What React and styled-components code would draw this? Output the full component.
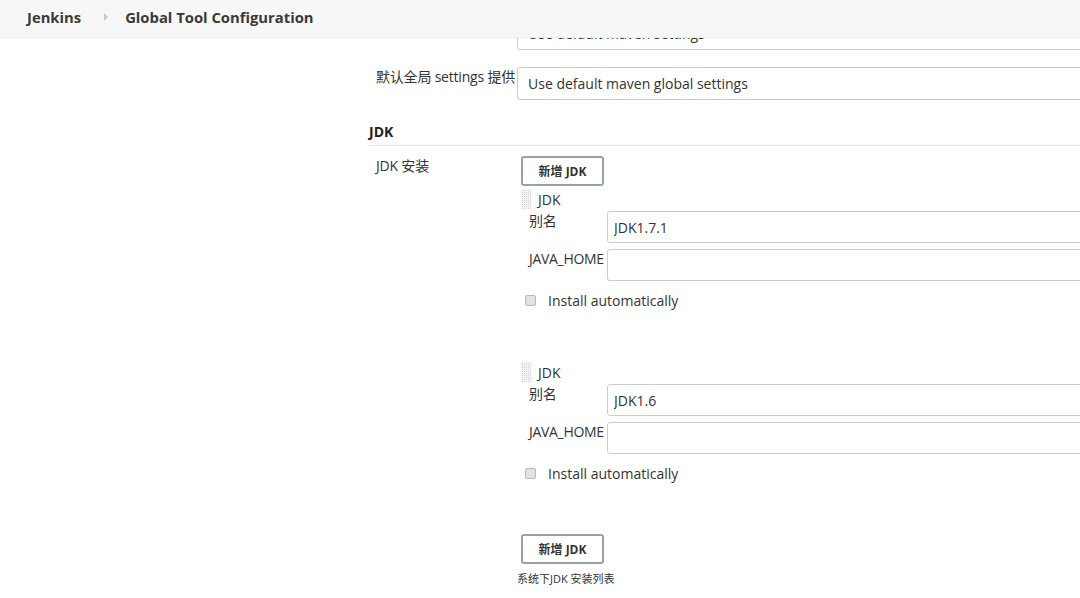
import React from "react"
import styled, { createGlobalStyle } from "styled-components"

const GlobalStyle = createGlobalStyle`
  html, body {
    margin: 0;
    padding: 0;
    overflow: hidden;
    background: #ffffff;
  }
  body {
    font-family: "Open Sans", "Noto Sans", "Noto Sans CJK SC", sans-serif;
    font-size: 14px;
    color: #333333;
  }
  * {
    box-sizing: border-box;
  }
`

const jdks = [
  { id: 1, alias: "JDK1.7.1" },
  { id: 2, alias: "JDK1.6" },
]

export default function App() {
  return (
    <>
      <GlobalStyle />
      <Header>
        <Crumb>Jenkins</Crumb>
        <Chevron />
        <Crumb>Global Tool Configuration</Crumb>
      </Header>
      <Page>
        <SidePanel />
        <Main>
          <Row>
            <Label>默认 settings 提供</Label>
            <Field readOnly value="Use default maven settings" />
          </Row>
          <Row>
            <Label>默认全局 settings 提供</Label>
            <Field readOnly value="Use default maven global settings" />
          </Row>

          <SectionTitle>JDK</SectionTitle>

          <Row>
            <Label>JDK 安装</Label>
            <Content>
              <AddButton>新增 JDK</AddButton>
              {jdks.map((jdk) => (
                <Block key={jdk.id}>
                  <HandleRow>
                    <Handle />
                    <span>JDK</span>
                  </HandleRow>
                  <SubRow>
                    <SubLabel>别名</SubLabel>
                    <SubField readOnly value={jdk.alias} />
                  </SubRow>
                  <SubRow>
                    <SubLabel>JAVA_HOME</SubLabel>
                    <SubField readOnly value="" />
                  </SubRow>
                  <CheckRow>
                    <CheckBox />
                    <span>Install automatically</span>
                  </CheckRow>
                </Block>
              ))}
              <AddButton $top={2}>新增 JDK</AddButton>
              <Description>系统下JDK 安装列表</Description>
            </Content>
          </Row>
        </Main>
      </Page>
    </>
  )
}

const Header = styled.header`
  position: fixed;
  top: 0;
  left: 0;
  right: 0;
  height: 38px;
  display: flex;
  align-items: center;
  padding: 0 0 4px 27px;
  background: #f7f7f7;
  border-bottom: 1px solid #eceef0;
  z-index: 10;
`

const Crumb = styled.span`
  font-size: 14.8px;
  font-weight: 700;
  color: #3a3a3a;
  line-height: 20px;
`

const Chevron = styled.span`
  width: 0;
  height: 0;
  margin: 0 17px 0 23px;
  border-top: 4px solid transparent;
  border-bottom: 4px solid transparent;
  border-left: 4px solid #c8c8c8;
`

const Page = styled.div`
  display: flex;
  padding-top: 17px;
`

const SidePanel = styled.aside`
  flex: 0 0 369px;
`

const Main = styled.main`
  flex: 0 0 900px;
`

const Row = styled.div`
  display: flex;
  align-items: flex-start;
  margin-bottom: 17px;
`

const Label = styled.div`
  flex: 0 0 148px;
  padding-left: 7px;
  line-height: 20px;
  white-space: nowrap;
  letter-spacing: -0.2px;
  color: #333333;
`

const Field = styled.input`
  flex: 1;
  height: 33px;
  padding: 0 10px;
  border: 1px solid #cccccc;
  border-radius: 3px;
  font-family: inherit;
  font-size: 14px;
  color: #333333;
  background: #ffffff;
  outline: none;
`

const SectionTitle = styled.h3`
  margin: 22px 0 10px;
  padding-bottom: 3px;
  line-height: 20px;
  font-size: 14px;
  font-weight: 700;
  color: #222222;
  border-bottom: 1px solid #e5e5e5;
`

const Content = styled.div`
  flex: 1;
  display: flex;
  flex-direction: column;
  align-items: stretch;
`

const AddButton = styled.button`
  align-self: flex-start;
  width: 83px;
  height: 30px;
  margin: ${(props) => props.$top || 0}px 0 0 4px;
  padding: 0;
  border: 2px solid #98a2aa;
  border-radius: 3px;
  background: #ffffff;
  font-family: inherit;
  font-size: 12px;
  font-weight: 700;
  color: #333333;
`

const Block = styled.div`
  margin-top: 3px;
  padding: 0 0 50px 4px;
`

const HandleRow = styled.div`
  display: flex;
  align-items: center;
  gap: 7px;
  height: 20px;
  margin-bottom: 2px;
`

const Handle = styled.span`
  width: 10px;
  height: 20px;
  background-color: #d4d4d4;
  background-image: linear-gradient(90deg, #f4f4f4 1px, transparent 1px),
    linear-gradient(#f4f4f4 1px, transparent 1px);
  background-size: 2px 2px;
`

const SubRow = styled.div`
  display: flex;
  align-items: flex-start;
  padding-left: 8px;
  margin-bottom: 6px;
`

const SubLabel = styled.div`
  flex: 0 0 78px;
  line-height: 20px;
  white-space: nowrap;
  letter-spacing: -0.3px;
`

const SubField = styled(Field)`
  height: 32px;
  padding: 0 6px;
`

const CheckRow = styled.label`
  display: flex;
  align-items: center;
  gap: 12px;
  height: 18px;
  margin-top: 10px;
  padding-left: 4px;
`

const CheckBox = styled.span`
  width: 11px;
  height: 11px;
  border: 1px solid #b9b9b9;
  border-radius: 2px;
  background: #e2e2e2;
`

const Description = styled.div`
  margin-top: 7px;
  font-size: 11px;
  line-height: 16px;
  color: #333333;
`
